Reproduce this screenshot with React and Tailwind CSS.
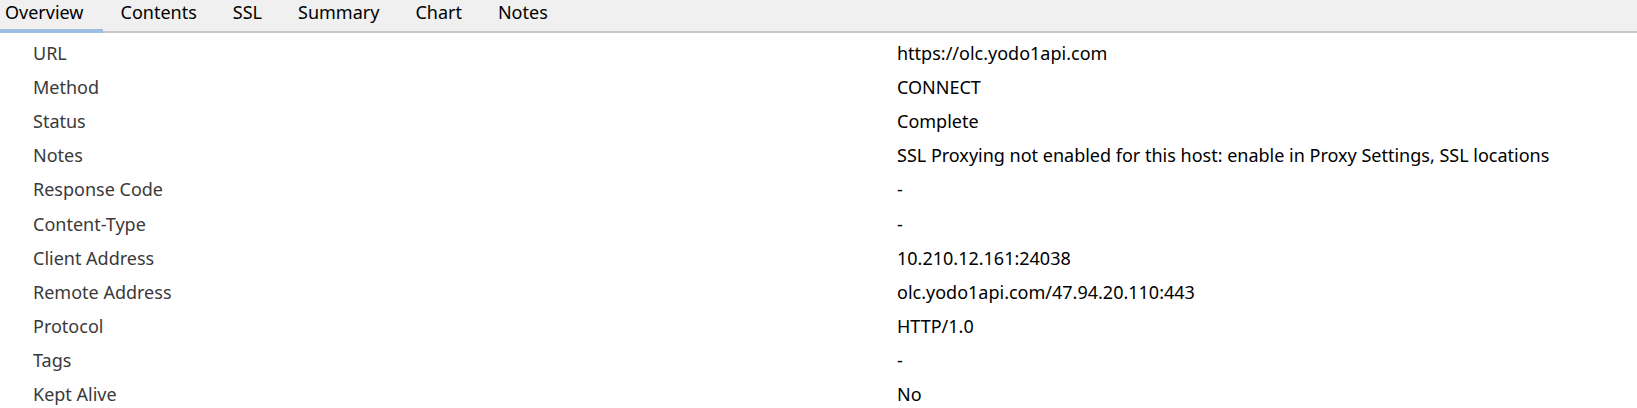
import React from 'react';

const tabs = ['Overview', 'Contents', 'SSL', 'Summary', 'Chart', 'Notes'];

const rows = [
  ['URL', 'https://olc.yodo1api.com'],
  ['Method', 'CONNECT'],
  ['Status', 'Complete'],
  ['Notes', 'SSL Proxying not enabled for this host: enable in Proxy Settings, SSL locations'],
  ['Response Code', '-'],
  ['Content-Type', '-'],
  ['Client Address', '10.210.12.161:24038'],
  ['Remote Address', 'olc.yodo1api.com/47.94.20.110:443'],
  ['Protocol', 'HTTP/1.0'],
  ['Tags', '-'],
  ['Kept Alive', 'No'],
];

export default function App() {
  return (
    <div className="w-[1637px] h-[408px] overflow-hidden bg-white font-['Noto_Sans',sans-serif] text-[18px]">
      {/* Tab strip */}
      <div className="flex h-[33px] bg-[#f0f0f0] border-b-2 border-[#c8c8c8]">
        {tabs.map((t, i) => (
          <div
            key={t}
            className={`relative flex items-center leading-none pb-[7px] ${
              i === 0 ? 'pl-[5px] pr-[19px]' : 'px-[18px]'
            } text-black`}
          >
            {t}
            {i === 0 && (
              <div className="absolute left-0 right-0 -bottom-[2px] h-[4px] bg-[#9dbee0]" />
            )}
          </div>
        ))}
      </div>

      {/* Properties */}
      <div className="pt-[3px]">
        {rows.map(([k, v]) => (
          <div key={k} className="flex items-center h-[34.2px]">
            <div className="w-[897px] pl-[33px] text-[#3a3a3a]">{k}</div>
            <div className="text-black">{v}</div>
          </div>
        ))}
      </div>
    </div>
  );
}
